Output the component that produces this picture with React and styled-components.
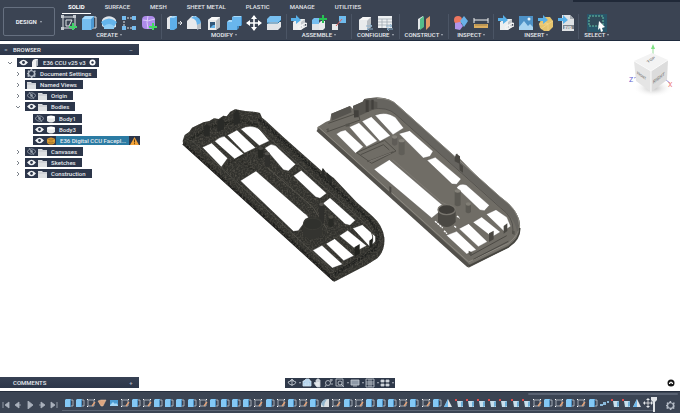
import React from 'react';
import styled, { createGlobalStyle } from 'styled-components';

const GlobalStyle = createGlobalStyle`
  * {
    box-sizing: border-box;
  }

  body {
    margin: 0;
    background: #fff;
    font-family: Roboto, "Open Sans", sans-serif;
    font-size: 6px;
    color: #e8ebef;
  }

  button {
    font: inherit;
    color: inherit;
    border: 0;
    padding: 0;
    background: none;
    cursor: pointer;
  }

  svg {
    display: block;
  }
`;

const Page = styled.div`
  min-height: 100vh;
  display: flex;
  flex-direction: column;
`;

/* ---------- toolbar ---------- */

const Header = styled.header`
  position: relative;
  display: flex;
  height: 41px;
  background: #3b4453;
  border-bottom: 1px solid #1f2b3e;
`;

const TitleStrip = styled.div`
  position: absolute;
  top: 0;
  right: 0;
  width: 107px;
  height: 2px;
  background: #202938;
`;

const DesignButton = styled.button`
  width: 52px;
  height: 29px;
  margin: 7px 2px 0 3px;
  border: 1px solid #667080 !important;
  border-radius: 2px;
  font-weight: 700 !important;
`;

const Ribbon = styled.div`
  flex: 1;
  min-width: 0;
`;

const Tabs = styled.nav`
  display: flex;
  gap: 8px;
  padding: 3px 0 0 5px;
`;

const Tab = styled.button`
  height: 11px;
  padding: 0 6px 2px !important;
  line-height: 8px !important;
  font-weight: ${(p) => (p.$active ? 700 : 500)} !important;
  color: ${(p) => (p.$active ? '#fff' : '#e2e5e9')} !important;
  border-bottom: 1px solid ${(p) => (p.$active ? '#fff' : 'transparent')} !important;
  white-space: nowrap;
`;

const Groups = styled.div`
  display: flex;
`;

const Group = styled.div`
  display: flex;
  flex-direction: column;
  align-items: center;
  height: 25px;
  padding: 0 2px;
  border-right: 1px solid ${(p) => (p.$last ? 'transparent' : '#4b5565')};
`;

const GroupIcons = styled.div`
  display: flex;
`;

const ToolButton = styled.button`
  width: 20px;
  height: 17px;
  display: flex;
  align-items: center;
  justify-content: center;
`;

const GroupLabel = styled.button`
  padding: 0 3px !important;
  line-height: 8px !important;
  font-weight: 500 !important;
  white-space: nowrap;
`;

const Caret = styled.span`
  display: inline-block;
  margin-left: 2px;
  vertical-align: 1px;
  border: 1px solid transparent;
  border-top: 2px solid #aab1bc;
  border-bottom: 0;
`;

/* ---------- workspace ---------- */

const Workspace = styled.main`
  position: relative;
  flex: 1;
  display: flex;
  flex-direction: column;
  justify-content: space-between;
`;

const ModelView = styled.svg`
  position: absolute;
  inset: 0;
  width: 100%;
  height: 100%;
`;

const TopRow = styled.div`
  position: relative;
  display: flex;
  justify-content: space-between;
  padding-top: 3px;
`;

const BottomRow = styled.div`
  position: relative;
  display: grid;
  grid-template-columns: 139px 1fr 139px;
  align-items: center;
  padding-bottom: 3px;
`;

const PanelBar = styled.div`
  display: flex;
  align-items: center;
  width: 139px;
  height: 11px;
  padding: 0 5px 0 ${(p) => (p.$indent ? '13px' : '3px')};
  background: linear-gradient(#374154, #2c3649);
  font-weight: 500;
  line-height: 11px;
`;

const PanelTitle = styled.span`
  flex: 1;
`;

const Toggle = styled.button`
  width: 6px;
  margin-right: ${(p) => (p.$lead ? '4px' : '0')};
  line-height: 9px !important;
  color: #aeb6c1 !important;
`;

const Tree = styled.ul`
  list-style: none;
  margin: 0;
  padding: ${(p) => (p.$nested ? '1px 0 0' : '2px 0 0 7px')};
`;

const TreeRow = styled.div`
  display: flex;
  align-items: center;
  height: 11px;
  padding-left: ${(p) => p.$level * 8}px;
`;

const Twisty = styled.button`
  display: flex;
  width: 7px;
  margin-right: 3px;
`;

const TreePill = styled.div`
  display: flex;
  align-items: center;
  height: 9px;
  padding: 0 ${(p) => (p.$warn ? '0' : '3px')} 0 1px;
  background: #2c364a;
`;

const TreeIcon = styled.span`
  width: 11px;
  display: flex;
  justify-content: center;
`;

const TreeName = styled.span`
  margin-left: ${(p) => (p.$selected ? '0' : '3px')};
  padding: 0 3px 0 ${(p) => (p.$selected ? '4px' : '0')};
  line-height: 9px;
  font-weight: 500;
  white-space: nowrap;
  background: ${(p) => (p.$selected ? '#2b7ba3' : 'none')};
`;

const NavBar = styled.div`
  justify-self: center;
  display: flex;
  align-items: center;
  height: 10px;
  padding: 0 1px;
  background: #2f394a;
`;

const NavButton = styled.button`
  display: flex;
  align-items: center;
  justify-content: center;
  width: ${(p) => (p.$menu ? '15px' : '11px')};
`;

const HelpButton = styled.button`
  justify-self: end;
  margin-right: 5px;
`;

/* ---------- timeline ---------- */

const TimelineBar = styled.footer`
  display: flex;
  height: 22px;
  background: #3b4453;
  border-top: 1px solid #262f3e;
`;

const Playback = styled.div`
  display: flex;
  align-items: center;
  padding-top: 5px;
`;

const PlayButton = styled.button`
  display: flex;
  justify-content: center;
  width: 12px;
`;

const Track = styled.div`
  position: relative;
  flex: 1;
  margin-left: 2px;
  padding: 6px 1px 0 2px;
  border-bottom: 2px solid #3b4453;
  box-shadow: inset 0 -1px #5d6675;
`;

const Features = styled.div`
  display: flex;
  justify-content: space-between;
`;

const Feature = styled.button`
  width: 10px;
  height: 10px;
`;

const Marker = styled.svg`
  position: absolute;
  right: -3px;
  top: 4px;
`;

const TimelineEnd = styled.div`
  display: flex;
  flex-direction: column;
  align-items: center;
  width: 25px;
  padding: 9px 0 0 6px;
`;

const ScrollThumb = styled.div`
  position: absolute;
  right: -23px;
  top: 1px;
  width: 150px;
  height: 2px;
  border-radius: 1px;
  background: #596272;
`;

/* ---------- icons ---------- */

const Box = () => (
  <>
    <path d="M2 5 6 2h8v10l-4 3H2z" fill="#e9ebec" />
    <path d="M10 6v9l4-3V2z" fill="#b9bec3" />
    <path d="M2 5h8l4-3H6z" fill="#f8f8f8" />
  </>
);

const BlueArrow = () => <path d="M0 3h5V0l5 5-5 4V6H0z" fill="#58b0e8" />;

const Chain = () => (
  <g fill="none" stroke="#f3f4f5" strokeWidth="1.3">
    <rect x="7" y="11" width="5" height="3" rx="1.5" transform="rotate(-25 9 12)" />
    <rect x="11" y="9" width="5" height="3" rx="1.5" transform="rotate(-25 13 10)" />
  </g>
);

const Swap = () => (
  <path d="M9 11h6m-2-2 2 2-2 1M16 14h-6m2-1-2 1 2 2" stroke="#8fb2cd" fill="none" />
);

const icons = {
  sketch: (
    <>
      <path d="M2 2h12v11H2zM5 5h6L8 11H5z" fill="none" stroke="#dfe2e6" />
      <path d="M0 0h3v3H0zM12 0h3v3h-3zM0 12h3v3H0z" fill="#c5cad0" />
      <path d="M12 8v7M8 12h8" stroke="#41d36a" strokeWidth="2" />
    </>
  ),
  extrude: (
    <>
      <path d="M10 2h5v11h-5" fill="none" stroke="#dce2e8" />
      <path d="M1 4 4 1h9v11l-3 3H1z" fill="#75bdf0" />
      <path d="m10 4 3-3v11l-3 3z" fill="#4b98d2" />
      <path d="m1 4 3-3h9l-3 3z" fill="#a8dafa" />
    </>
  ),
  revolve: (
    <>
      <path d="M1 5C4 0 12 0 15 5v7l-3 1V8H4v5l-3-2z" fill="#dde4ea" />
      <path d="M0 7q8-7 16 0l-3 5q-5-4-10 0z" fill="#64b5ec" />
      <path d="M3 11q5-4 10 0v3H3z" fill="#8dcdf6" />
    </>
  ),
  pattern: (
    <>
      <path d="M3 3h10M3 3v10M3 13h10" stroke="#e1e5e9" strokeDasharray="2 1" />
      <path d="M1 1h4v4H1zM11 1h4v4h-4zM1 11h4v4H1zM11 11h4v4h-4z" fill="#76bdf0" />
    </>
  ),
  form: (
    <>
      <rect x="1" y="1" width="13" height="13" rx="4" fill="#ad8bea" />
      <path d="M2 5q5 2 12-1M7 1q-2 6 0 13" stroke="#dccbfb" fill="none" />
      <path d="M12 8v7M8 12h8" stroke="#43dc62" strokeWidth="2" />
    </>
  ),
  pressPull: (
    <>
      <path d="M1 3 4 1h4v13H1z" fill="#e5e8eb" />
      <path d="M4 3 7 1h4v12l-3 2H4z" fill="#5eafea" />
      <path d="M4 3 7 1h4L8 3z" fill="#a5d8f8" />
      <path d="M12 8h3m-1-2 2 2-2 2" stroke="#e7eaed" fill="none" />
    </>
  ),
  fillet: (
    <>
      <path d="M1 6 6 1h4l5 7v6H1z" fill="#e8eaec" />
      <path d="M5 3 8 1q7 1 7 8l-4 1q0-6-6-7" fill="#65b3ea" />
      <path d="M11 10v5l4-2V8z" fill="#b9bfc5" />
    </>
  ),
  shell: (
    <>
      <Box />
      <path d="M4 7h5v6H4z" fill="#31577a" />
      <path d="m4 13 3-3h2v3z" fill="#64b2e8" />
    </>
  ),
  combine: (
    <>
      <path d="M6 2h9v9h-4v4H1V7h5z" fill="#69b6ed" />
      <path d="m6 2 2-1h8l-1 1zM1 7l2-2h3v2z" fill="#a7dafa" />
      <path d="m15 2 1-1v9l-1 1zM11 11v4l2-2v-2z" fill="#438fc9" />
    </>
  ),
  move: (
    <>
      <path d="M8 1v14M1 8h14" stroke="#fff" strokeWidth="1.6" />
      <path d="m8 0 3 4H5zM8 16l3-4H5zM0 8l4-3v6zM16 8l-4-3v6z" fill="#fff" />
    </>
  ),
  split: (
    <>
      <path d="m1 4 3-3h11v4l-3 3H1z" fill="#78bff0" />
      <path d="m1 9 3-2h11v5l-3 3H1z" fill="#e1e4e7" />
      <path d="M1 8h11l3-3" stroke="#327dac" fill="none" />
    </>
  ),
  component: (
    <>
      <path d="M2 7 6 4h8v8l-4 3H2z" fill="#eceeef" />
      <path d="M10 7v8l4-3V4z" fill="#c2c7cc" />
      <BlueArrow />
      <Chain />
    </>
  ),
  newComponent: (
    <>
      <path d="M1 5 3 3h5v12H1z" fill="#75bdef" />
      <path d="m8 8 2-2h4v7l-2 2H8z" fill="#e8eaec" />
      <path d="M1 9h7v6H1z" fill="#dfe4e8" />
      <path d="M12 0v8M8 4h8" stroke="#27c253" strokeWidth="2" />
    </>
  ),
  joint: (
    <>
      <path d="M8 1h7v7H8z" fill="#6fbbed" />
      <path d="M1 9h6v6H1z" fill="#e7e9eb" />
      <path d="m5 11 6-7" stroke="#e25f5c" />
    </>
  ),
  configure: (
    <>
      <Box />
      <Swap />
    </>
  ),
  table: (
    <>
      <path d="M1 1h14v12H1z" fill="#edf0f2" />
      <path d="M1 4h14M1 7h14M1 10h14M5 4v9M10 4v9" stroke="#9aa3ac" strokeWidth=".7" />
      <Swap />
    </>
  ),
  plane: (
    <>
      <path d="m2 4 5-3v11l-5 3z" fill="#e3e6e8" />
      <path d="m4 4 4-3v11l-4 3z" fill="#54bd8b" />
      <path d="m10 4 4-3v10l-4 4z" fill="#e29a66" />
    </>
  ),
  interference: (
    <>
      <circle cx="5" cy="5" r="4" fill="#ec765f" />
      <path d="m11 1 4 5-4 6-4-6z" fill="#69b1e7" />
      <path d="m2 8 5-1 3 4-3 4-5-1z" fill="#af94eb" />
    </>
  ),
  measure: (
    <>
      <path d="M1 5h14M1 3v5M15 3v5" stroke="#f2f2f2" />
      <path d="M1 9h14v4H1z" fill="#dcae60" />
      <path d="M3 9v2M5 9v2M7 9v2M9 9v2M11 9v2M13 9v2" stroke="#7a633a" strokeWidth=".6" />
    </>
  ),
  canvas: (
    <>
      <path d="M1 1h14v14H1z" fill="#4d91c6" />
      <path d="m1 12 5-6 4 5 2-2 3 3v3H1z" fill="#a8d4f1" />
      <circle cx="11" cy="4" r="1.5" fill="#e7f4fc" />
    </>
  ),
  mesh: (
    <>
      <path d="m3 5 4-3h5l3 4v6l-4 4H6l-4-3-1-4z" fill="#e6c46d" />
      <path d="m3 5 7 4 5-3M10 9v7M1 9l9 0-7 5" stroke="#f3d78d" strokeWidth=".7" fill="none" />
      <BlueArrow />
    </>
  ),
  svgFile: (
    <>
      <path d="M4 0h8l4 4v12H4z" fill="#dfe2e5" />
      <path d="M12 0v4h4z" fill="#a6acb2" />
      <path d="M5 10h11v4H5z" fill="#7d858d" />
      <text x="6" y="14" fontSize="4" fontWeight="700" fill="#fff">SVG</text>
      <BlueArrow />
    </>
  ),
};

const Icon = ({ name, size = 16 }) => (
  <svg width={size} height={size} viewBox="0 0 16 16" aria-hidden="true">
    {icons[name]}
  </svg>
);

const SelectIcon = () => (
  <svg width="20" height="18" viewBox="0 0 20 18" aria-hidden="true">
    <path d="M0 0h20v18H0z" fill="#28566a" />
    <path d="M2 2h14v10H2z" fill="#304b5a" stroke="#67c5a7" strokeDasharray="2 1" />
    <path d="m12 7 6 6-3 1 1 3-2 1-1-4-2 2z" fill="#fff" />
  </svg>
);

const featureIcons = {
  E: (
    <>
      <path d="M6 2h3v6H6" fill="none" stroke="#cfd6dc" strokeWidth=".7" />
      <path d="m1 2 1-1h5v7L6 9H1z" fill="#83c8f5" />
      <path d="m6 2 1-1v7L6 9z" fill="#4c92c5" />
    </>
  ),
  S: (
    <>
      <path d="M2 2h6v6H2z" fill="none" stroke="#bdc3ca" strokeWidth=".8" />
      <path d="M1 1h1v1H1zM8 1h1v1H8zM1 8h1v1H1z" fill="#fff" />
      <path d="M9 4 6 8" stroke="#e6a477" strokeWidth="1.3" />
    </>
  ),
  P: <path d="m1 3 3-1h5L6 8H4z" fill="#dda680" stroke="#f0c8a8" strokeWidth=".5" />,
  C: (
    <>
      <path d="M1 2h8v6H1z" fill="#4c9bd1" />
      <path d="m1 7 3-3 2 2 1-1 2 2v1H1z" fill="#a4d6f5" />
    </>
  ),
  F: (
    <>
      <path d="M1 6q2-5 8-5v8H1z" fill="#d9dee2" />
      <path d="M1 6q2-5 6-5-3 4-3 8z" fill="#91b4cb" />
    </>
  ),
  T: (
    <>
      <path d="m5 1 4 8H1z" fill="#dfe4e8" />
      <path d="m5 1 0 8H1z" fill="#6db6e8" />
    </>
  ),
  R: (
    <>
      <path d="M3 3h6v6H4z" fill="#c7dfed" />
      <path d="m7 4 2-1v5L7 9z" fill="#6eaed7" />
      <path d="M1 1h2v2H1z" fill="#df4e50" />
    </>
  ),
  D: <path d="M1 6h3v2H1zM4 4h3v3H4zM8 3h2v2H8z" fill="#8bb9da" />,
  M: (
    <>
      <path d="M5 2v6M2 5h6" stroke="#eee" strokeWidth=".8" />
      <path d="m5 0 2 2H3zM5 10l2-2H3zM0 5l2-2v4zM10 5 8 3v4z" fill="#e5e8eb" />
    </>
  ),
};

const timeline = 'EESPCSESEEEESEEEESESESEFSESEEESESETRRRRRRRSESESEDRRTM';

const Eye = ({ off }) => (
  <svg width="9" height="7" viewBox="0 0 9 7" aria-hidden="true">
    <path
      d="M0 3.5Q4.5-2 9 3.5 4.5 9 0 3.5z"
      fill={off ? 'none' : '#f0f2f4'}
      stroke={off ? '#a2aab5' : 'none'}
      strokeWidth=".8"
    />
    <circle cx="4.5" cy="3.5" r="1.4" fill={off ? '#8d97a4' : '#2c364a'} />
    {off && <path d="m2 0 5 7" stroke="#a2aab5" strokeWidth=".7" />}
  </svg>
);

const gearPath =
  'M4 0h1l.4 1.4 1.2.5L8 1.2l.8.9-.7 1.3.3 1L9 5l-.9 1 .5 1.3-.9.8-1.3-.5L5 9H4l-.5-1.4L2.3 7.5 1 8l-.7-1 .7-1.3L0 5V4l1.2-.6L.6 2l.8-.8 1.3.6z';

const Gear = ({ color = '#b4bbc5', hole = '#2c364a', size = 9 }) => (
  <svg width={size} height={size} viewBox="0 0 9 9" aria-hidden="true">
    <path d={gearPath} fill={color} />
    <circle cx="4.5" cy="4.5" r="2.3" fill={hole} />
  </svg>
);

const kinds = {
  doc: (
    <svg width="8" height="8" viewBox="0 0 8 8">
      <path d="m2 1 2-1h3v6L5 8H1V3z" fill="#f1f2f3" />
      <path d="m5 2 2-2v6L5 8z" fill="#b6bcc4" />
    </svg>
  ),
  gear: <Gear />,
  folder: (
    <svg width="9" height="8" viewBox="0 0 9 8">
      <path d="M0 1h4l1 1h4v6H0z" fill="#dddfe1" />
      <path d="M0 3h9" stroke="#aeb3b9" strokeWidth=".6" />
    </svg>
  ),
  body: (
    <svg width="8" height="8" viewBox="0 0 8 8">
      <path d="M0 2v4q4 3 8 0V2z" fill="#e7e9ea" />
      <ellipse cx="4" cy="2" rx="4" ry="1.5" fill="#fff" />
    </svg>
  ),
  mesh: (
    <svg width="8" height="8" viewBox="0 0 8 8">
      <path d="M0 2q4-3 8 0v4q-4 3-8 0z" fill="#e0a238" />
      <path d="M0 2q4 2 8 0M0 5q4 2 8 0M3 1v7M5 1v7" stroke="#8c6122" strokeWidth=".5" fill="none" />
    </svg>
  ),
};

const Warning = () => (
  <svg width="11" height="8" viewBox="0 0 11 8" aria-label="Warning">
    <path d="m5.5 0 4.5 8H1z" fill="#f3a338" />
    <path d="M5.5 2.5v3M5.5 6.2v1" stroke="#5a3a10" />
  </svg>
);

/* ---------- data ---------- */

const tabs = ['SOLID', 'SURFACE', 'MESH', 'SHEET METAL', 'PLASTIC', 'MANAGE', 'UTILITIES'];

const groups = [
  { label: 'CREATE', tools: ['sketch', 'extrude', 'revolve', 'pattern', 'form'] },
  { label: 'MODIFY', tools: ['pressPull', 'fillet', 'shell', 'combine', 'move', 'split'] },
  { label: 'ASSEMBLE', tools: ['component', 'newComponent', 'joint'] },
  { label: 'CONFIGURE', tools: ['configure', 'table'] },
  { label: 'CONSTRUCT', tools: ['plane'] },
  { label: 'INSPECT', tools: ['interference', 'measure'] },
  { label: 'INSERT', tools: ['component', 'canvas', 'mesh', 'svgFile'] },
];

const tree = [
  { name: 'E36 CCU v25 v3', level: 0, open: true, eye: 'on', kind: 'doc', root: true },
  { name: 'Document Settings', level: 1, kind: 'gear' },
  { name: 'Named Views', level: 1, kind: 'folder' },
  { name: 'Origin', level: 1, eye: 'off', kind: 'folder' },
  {
    name: 'Bodies',
    level: 1,
    open: true,
    eye: 'on',
    kind: 'folder',
    children: [
      { name: 'Body1', level: 2, leaf: true, eye: 'off', kind: 'body' },
      { name: 'Body3', level: 2, leaf: true, eye: 'on', kind: 'body' },
      { name: 'E36 Digital CCU Facepl...', level: 2, leaf: true, eye: 'on', kind: 'mesh', selected: true },
    ],
  },
  { name: 'Canvases', level: 1, eye: 'off', kind: 'folder' },
  { name: 'Sketches', level: 1, eye: 'on', kind: 'folder' },
  { name: 'Construction', level: 1, eye: 'on', kind: 'folder' },
];

const TreeItem = ({ item }) => (
  <li>
    <TreeRow $level={item.level}>
      <Twisty as={item.leaf ? 'span' : 'button'} aria-label={item.leaf ? undefined : `Toggle ${item.name}`}>
        {!item.leaf && (
          <svg width="6" height="6" viewBox="0 0 6 6">
            <path d={item.open ? 'M1 2l2 2 2-2' : 'M2 1l2 2-2 2'} fill="none" stroke="#7c828a" />
          </svg>
        )}
      </Twisty>
      <TreePill $warn={item.selected}>
        {item.eye && <TreeIcon><Eye off={item.eye === 'off'} /></TreeIcon>}
        <TreeIcon>{kinds[item.kind]}</TreeIcon>
        <TreeName $selected={item.selected}>{item.name}</TreeName>
        {item.root && (
          <svg width="7" height="7" viewBox="0 0 7 7">
            <circle cx="3.5" cy="3.5" r="3" fill="#fff" />
            <circle cx="3.5" cy="3.5" r="1.2" fill="#2c364a" />
          </svg>
        )}
        {item.selected && <Warning />}
      </TreePill>
    </TreeRow>
    {item.children && (
      <Tree $nested>
        {item.children.map((c) => <TreeItem key={c.name} item={c} />)}
      </Tree>
    )}
  </li>
);

/* ---------- models ---------- */

const meshHoles = [
  'M97 157 125 144 173 190 154 216z',
  'M134 139Q148 126 163 124L221 176 194 192z',
  'M172 121 201 105 257 158 224 174z',
  'M212 102Q240 86 268 102L298 138 268 152z',
  'M284 159 303 148Q318 150 325 160L377 208 355 228 340 224z',
  'M370 242 394 226 470 295 450 310 437 306z',
  'M459 325 480 308 556 376 540 391 525 387z',
  'M211 257 258 228 402 354Q428 370 404 382L385 407 370 409z',
  'M428 466 456 451 518 508 487 519z',
  'M468 446 494 431 552 482 521 497z',
  'M508 422 533 406 590 452 562 467z',
  'M548 400 577 389 616 424 617 438 600 456z',
].join('');

const meshOutline =
  'M38 138 44 120 58 110 66 98 100 82 118 78 132 70 146 72 160 62 170 64 181 50 195 43 226 48 257 51 270 54 276 68 284 74 340 126 455 228 459 220 468 232 492 250 560 322 606 362Q638 390 643 428 646 466 622 490L590 510 493 560 40 149z';

const solidHoles = [
  'M79 132Q92 122 106 120L160 170 137 190z',
  'M118 111 147 98 202 153 170 170z',
  'M156 94 184 80 241 137 210 154z',
  'M195 76Q228 62 256 82L281 114 249 134z',
  'M267 131 299 122 369 184 360 199 340 204z',
  'M351 211 376 202 453 267 440 283 426 282z',
  'M440 293Q450 278 469 285L538 346 523 362 510 360z',
  'M192 238 238 209 405 352 365 384z',
  'M409 436 440 424 499 479 470 492z',
  'M447 416 476 401 532 455 505 470z',
  'M489 397 515 381 571 426 546 441z',
  'M529 373 558 359 591 382 602 409 581 423z',
].join('');

const solidOutline =
  'M22 112 47 96 60 91 64 71 120 48 130 58 129 48 158 35 163 27Q230 12 263 46L303 82 435 205 441 190 451 207 500 257 570 320Q628 362 630 405 632 445 595 473L476 533 22 121z';

const Post = ({ x, y, h, w = 16, fill, top }) => (
  <g>
    <path d={`M${x} ${y}h${w}v${h}q${-w / 2} 8 ${-w} 0z`} fill={fill} />
    <ellipse cx={x + w / 2} cy={y} rx={w / 2} ry="5" fill={top} />
  </g>
);

const MeshModel = () => (
  <g transform="translate(170 95) scale(.33333)">
    <path d={meshOutline + meshHoles} fill="#31312d" fillRule="evenodd" />
    <g fill="none" strokeLinejoin="round">
      <path d="M40 145 493 556" stroke="#1f1f1d" strokeWidth="9" />
      <path d="M56 128 492 531" stroke="#4b4a45" strokeWidth="3" />
      <path d="M266 70 598 374Q636 408 615 463L493 538" stroke="#20211f" strokeWidth="9" />
      <path d="M240 77 581 382Q612 405 608 440" stroke="#4c4b46" strokeWidth="3" />
      <path d="M58 133 130 92 220 76 266 95" stroke="#252622" strokeWidth="9" />
      <path d={meshHoles} stroke="#252522" strokeWidth="1" />
      <path d="M161 214 206 188 250 166M206 192 252 226" stroke="#272723" strokeWidth="4" />
      <path d="M281 208 430 338 470 401" stroke="#54524c" strokeWidth="3" />
    </g>
    <g filter="url(#grain)">
      <path d={meshOutline + meshHoles} fill="#77766a" fillRule="evenodd" />
    </g>
    <Post x={284} y={176} h={37} fill="#30302d" top="#565550" />
    <Post x={264} y={160} h={26} fill="#272824" top="#45443f" />
    <Post x={447} y={328} h={57} w={15} fill="#30302d" top="#56544f" />
    <Post x={475} y={366} h={26} fill="#292a26" top="#504e47" />
    <path d="M399 388q0-22 29-22t29 22v30q-25 28-58 4z" fill="#343430" />
    <ellipse cx="428" cy="387" rx="28" ry="17" fill="#30312d" stroke="#403f3a" strokeWidth="2" />
    <path d="M101 95l9-9 9 10v26l-17 2zM142 79l12-9 8 7v26l-20 8zM190 59l10-16 8 13 3 27-20 9zM458 219l5 8v24l-8-4zM470 231l16 18v17l-16-12z" fill="#292a27" />
    <path d="M553 457l16-10v28l-14 10zM598 437l10-8v24l-10 8z" fill="#22231f" />
  </g>
);

const SolidModel = () => (
  <g transform="translate(310 90) scale(.33333)">
    <path d={solidOutline + solidHoles} fill="#706d66" fillRule="evenodd" />
    <path d="M163 27Q230 12 263 46L570 320Q628 362 630 405L623 434Q618 389 578 356L259 74Q232 48 158 58z" fill="#66645f" />
    <g fill="none" strokeLinejoin="round">
      <path d="M23 119 476 528" stroke="#52504b" strokeWidth="11" />
      <path d="M24 110 476 516 595 460Q628 435 629 405" stroke="#8c8981" strokeWidth="3" />
      <path d="M476 529 596 470Q630 447 629 414" stroke="#45443f" strokeWidth="5" />
      <path d="M476 521 596 463Q622 446 626 421" stroke="#77746d" strokeWidth="3" />
      <path d="M201 25Q243 24 263 47L572 322Q627 360 628 405" stroke="#8b8982" strokeWidth="3" />
      <path d="M180 58Q232 48 258 74L572 354Q610 380 609 421" stroke="#55534f" strokeWidth="3" />
      <path d={solidHoles} stroke="#4f4d48" strokeWidth="1" />
      <path d="M55 100 144 69 150 90 50 126M140 188 224 151 258 183 185 220zM152 194 220 164 238 180M172 215 250 185" stroke="#4f4d47" strokeWidth="3" />
      <path d="M248 209 395 337 433 353M178 214 243 189" stroke="#85817a" strokeWidth="2" />
      <path d="M481 497 590 437M490 508 595 454" stroke="#4b4944" strokeWidth="3" />
    </g>
    <path d="M64 71 120 48 125 67 65 92zM129 48 158 35 163 27 202 36V53L133 84z" fill="#56544f" />
    <path d="M167 31h9v35h-9zM184 29h7v29h-7zM132 61h14v21h-14z" fill="#42403c" />
    <Post x={246} y={141} h={22} fill="#5f5c57" top="#86837b" />
    <Post x={266} y={152} h={40} w={18} fill="#605e58" top="#87847c" />
    <Post x={434} y={303} h={42} w={18} fill="#5b5953" top="#86837b" />
    <Post x={467} y={342} h={24} fill="#5b5953" top="#817e76" />
    <path d="M384 358v38q26 30 53 0v-38z" fill="#4b4944" />
    <ellipse cx="410" cy="359" rx="26" ry="15" fill="#403e3a" stroke="#78756e" strokeWidth="4" />
    <path d="M375 394 398 414M402 422 411 431M433 408 440 414M441 378 449 385" stroke="#fff" strokeWidth="4" strokeDasharray="7 2" />
    <path d="M434 205l4-14 12 8v23l-16-8zM448 219l11 9v20l-10-7zM537 430l14-8v26l-14 8zM581 408l11-8v23l-11 8zM238 289l6 2v20l-6-5z" fill="#494742" />
    <path d="M476 482l9 5v11l-9-5zM606 420l8 4v11l-8-4zM107 102l12-2v9l-12 1zM48 118l8-3v10z" fill="#55534d" />
  </g>
);

const ViewCube = () => (
  <svg width="52" height="56" viewBox="0 0 52 56" role="img" aria-label="View cube">
    <defs>
      <radialGradient id="cubeShadow">
        <stop offset="0" stopColor="#bbb" />
        <stop offset="1" stopColor="#fff" stopOpacity="0" />
      </radialGradient>
    </defs>
    <ellipse cx="25" cy="44" rx="20" ry="9" fill="url(#cubeShadow)" />
    <path d="M25 13V3" stroke="#99df9b" />
    <path d="m25 0 2 5h-4z" fill="#80e184" />
    <path d="m6 34 3-1M38 36l4 3" stroke="#9b96df" />
    <path d="m6 17 18-8 16 7-17 11z" fill="#f3f3f3" />
    <path d="m6 17 17 10v21L8 37z" fill="#e5e5e5" />
    <path d="m23 27 17-11-1 20-16 12z" fill="#dcdcdc" />
    <path d="M6 17l17 10 17-11M23 27v21" stroke="#fafafa" fill="none" />
    <g fontSize="5" fontWeight="700" fill="#8b8b8b">
      <text transform="matrix(.8 -.5 .5 .5 20 19)">TOP</text>
      <text transform="matrix(.7 .5 0 1 9 30)" fontSize="4">FRONT</text>
      <text transform="matrix(.8 -.6 0 1 25 40)">RIGHT</text>
    </g>
    <text x="1" y="38" fontSize="7" fill="#605bcf">Z</text>
    <text x="40" y="43" fontSize="7" fill="#ee7777">X</text>
  </svg>
);

/* ---------- navigation ---------- */

const navItems = [
  { name: 'Orbit', menu: true, art: <path d="M1 4q4-3 8 0-1 3-4 3T1 4zM5 1v7M3 3l2-2 2 2" /> },
  { name: 'Look at', art: <path d="M1 3h8v5H1zM2 3l2-2h3l1 2M3 5h4v2H3z" fill="#a7cce9" stroke="#d7e7f3" /> },
  { name: 'Pan', art: <path d="M3 8 1 5l1-1 1 1V2h1v2-3h1v3-3h1v3-2h1v4L7 9H4z" fill="#e4e8eb" /> },
  { name: 'Zoom', art: <><circle cx="4" cy="5" r="2.5" /><path d="m2 7-1 2M7 1v3M6 2h3M7 6h2" /></> },
  { name: 'Fit', menu: true, art: <><path d="M1 1h7v7H1z" /><circle cx="5" cy="5" r="2" /><path d="m6 6 3 3" /></> },
  { name: 'Display settings', menu: true, art: <path d="M1 2h8v5H1zM3 8h4" fill="#8e99a7" /> },
  { name: 'Grid and snaps', menu: true, art: <path d="M1 1h8v8H1zM4 1v8M6 1v8M1 4h8M1 6h8" /> },
  { name: 'Viewports', menu: true, art: <path d="M1 2h3v2H1zM6 2h3v2H6zM1 6h3v2H1zM6 6h3v2H6z" fill="#d8dce1" /> },
];

const playback = [
  ['Go to start', 'M1 1v6M7 1 3 4l4 3z'],
  ['Step back', 'M5 1 1 4l4 3zM5 4h2'],
  ['Play', 'M2 0l5 4-5 4z'],
  ['Step forward', 'M3 1l4 3-4 3zM1 4h2'],
  ['Go to end', 'M1 1l4 3-4 3zM7 1v6'],
];

const App = () => (
  <Page>
    <GlobalStyle />
    <Header>
      <TitleStrip />
      <DesignButton>DESIGN <Caret /></DesignButton>
      <Ribbon>
        <Tabs>
          {tabs.map((t, i) => <Tab key={t} $active={i === 0}>{t}</Tab>)}
        </Tabs>
        <Groups>
          {groups.map((g) => (
            <Group key={g.label}>
              <GroupIcons>
                {g.tools.map((t) => (
                  <ToolButton key={t} aria-label={t}><Icon name={t} /></ToolButton>
                ))}
              </GroupIcons>
              <GroupLabel>{g.label}<Caret /></GroupLabel>
            </Group>
          ))}
          <Group $last>
            <GroupIcons>
              <ToolButton aria-label="select"><SelectIcon /></ToolButton>
            </GroupIcons>
            <GroupLabel>SELECT<Caret /></GroupLabel>
          </Group>
        </Groups>
      </Ribbon>
    </Header>

    <Workspace>
      <ModelView viewBox="0 41 680 350" role="img" aria-label="Faceplate models">
        <defs>
          <filter id="grain" x="0" y="0" width="1" height="1" colorInterpolationFilters="sRGB">
            <feTurbulence type="fractalNoise" baseFrequency=".2" numOctaves="2" seed="4" />
            <feColorMatrix values="0 0 0 0 .34  0 0 0 0 .33  0 0 0 0 .3  2 0 0 0 -.8" />
            <feComposite in2="SourceGraphic" operator="in" />
          </filter>
        </defs>
        <SolidModel />
        <MeshModel />
      </ModelView>

      <TopRow>
        <aside>
          <PanelBar>
            <Toggle $lead aria-label="Collapse browser">=</Toggle>
            <PanelTitle>BROWSER</PanelTitle>
            <Toggle aria-label="Minimize browser">–</Toggle>
          </PanelBar>
          <Tree>
            {tree.map((item) => <TreeItem key={item.name} item={item} />)}
          </Tree>
        </aside>
        <ViewCube />
      </TopRow>

      <BottomRow>
        <PanelBar $indent>
          <PanelTitle>COMMENTS</PanelTitle>
          <Toggle aria-label="Expand comments">+</Toggle>
        </PanelBar>
        <NavBar>
          {navItems.map((n) => (
            <NavButton key={n.name} $menu={n.menu} aria-label={n.name}>
              <svg width="10" height="10" viewBox="0 0 10 10" fill="none" stroke="#c8ced5" strokeWidth=".8">
                {n.art}
              </svg>
              {n.menu && <Caret />}
            </NavButton>
          ))}
        </NavBar>
        <HelpButton aria-label="Assistant">
          <svg width="8" height="8" viewBox="0 0 8 8">
            <circle cx="4" cy="4" r="3.5" fill="#161616" />
            <path d="M2 4q2-3 4 0v1H2z" fill="#fff" />
            <circle cx="4" cy="4.5" r=".7" fill="#161616" />
          </svg>
        </HelpButton>
      </BottomRow>
    </Workspace>

    <TimelineBar>
      <Playback>
        {playback.map(([name, d]) => (
          <PlayButton key={name} aria-label={name}>
            <svg width="8" height="8" viewBox="0 0 8 8">
              <path d={d} fill="#aab1bc" stroke="#aab1bc" strokeWidth=".8" />
            </svg>
          </PlayButton>
        ))}
      </Playback>
      <Track>
        <Features>
          {timeline.split('').map((f, i) => (
            <Feature key={i} aria-label={`Feature ${i + 1}`}>
              <svg width="10" height="10" viewBox="0 0 10 10">{featureIcons[f]}</svg>
            </Feature>
          ))}
        </Features>
        <Marker width="8" height="16" viewBox="0 0 8 16">
          <path d="M1 1h6v3L5 6v10H3V6L1 4z" fill="#e0e3e6" />
        </Marker>
        <ScrollThumb />
      </Track>
      <TimelineEnd>
        <button aria-label="Timeline settings"><Gear hole="#3b4453" /></button>
      </TimelineEnd>
    </TimelineBar>
  </Page>
);

export default App;
